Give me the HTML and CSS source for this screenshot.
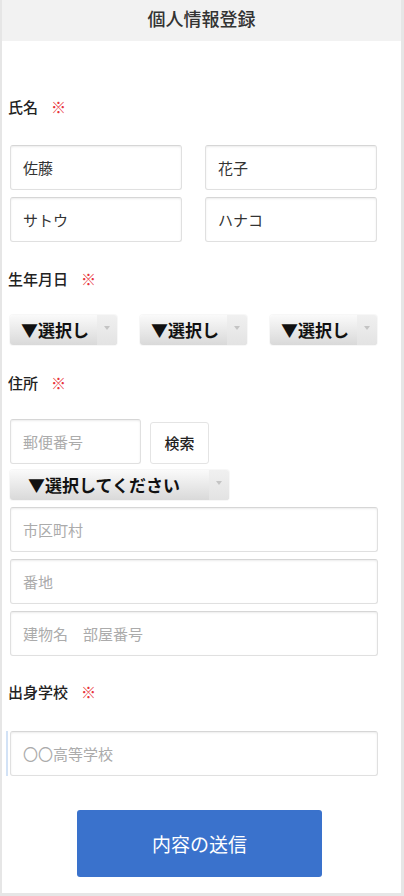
FILE: index.html
```html
<!DOCTYPE html>
<html lang="ja">
<head>
<meta charset="utf-8">
<title>個人情報登録</title>
<link rel="stylesheet" href="styles.css">
</head>
<body>
<div class="page">
  <header class="header">個人情報登録</header>
  <form class="form">
    <div class="label label-name">氏名<span class="req">※</span></div>
    <div class="name-grid">
      <div class="field">佐藤</div>
      <div class="field">花子</div>
      <div class="field">サトウ</div>
      <div class="field">ハナコ</div>
    </div>

    <div class="label label-birth">生年月日<span class="req">※</span></div>
    <div class="birth-grid">
      <div class="select"><span class="select-text">▼選択し</span><span class="select-btn"><span class="arrow"></span></span></div>
      <div class="select"><span class="select-text">▼選択し</span><span class="select-btn"><span class="arrow"></span></span></div>
      <div class="select"><span class="select-text">▼選択し</span><span class="select-btn"><span class="arrow"></span></span></div>
    </div>

    <div class="label label-addr">住所<span class="req">※</span></div>
    <div class="zip-row">
      <div class="field field-zip placeholder">郵便番号</div>
      <div class="search-btn">検索</div>
    </div>
    <div class="select select-wide"><span class="select-text">▼選択してください</span><span class="select-btn"><span class="arrow"></span></span></div>
    <div class="addr-list">
      <div class="field placeholder">市区町村</div>
      <div class="field placeholder">番地</div>
      <div class="field placeholder">建物名　部屋番号</div>
    </div>

    <div class="label label-school">出身学校<span class="req">※</span></div>
    <div class="focus-wrap">
      <div class="field placeholder">〇〇高等学校</div>
    </div>

    <div class="submit-row">
      <div class="submit">内容の送信</div>
    </div>
  </form>
</div>
</body>
</html>
```

FILE: styles.css
```css
* { box-sizing: border-box; }

html, body {
  margin: 0;
  padding: 0;
  background: #ffffff;
}

body {
  font-family: "Noto Sans CJK JP", "Noto Sans", sans-serif;
  color: #333333;
}

.page {
  width: 404px;
  height: 896px;
  border-left: 2px solid #e6e6e6;
  border-right: 3px solid #e6e6e6;
  border-bottom: 3px solid #e6e6e6;
  overflow: hidden;
}

.header {
  height: 41px;
  background: #f2f2f2;
  text-align: center;
  font-size: 18px;
  line-height: 36px;
  font-weight: 500;
  color: #333333;
}

.form {
  padding-left: 8px;
  width: 376px;
}

.label {
  font-size: 15px;
  line-height: 20px;
  height: 20px;
  font-weight: 500;
  color: #222222;
  margin-left: -2px;
}

.req {
  color: #e8333a;
  font-weight: 400;
  margin-left: 13px;
}

.label-name { margin-top: 56px; }
.label-birth { margin-top: 27px; }
.label-addr { margin-top: 28px; }
.label-school { margin-top: 26px; }

.field {
  height: 45px;
  border: 1px solid #e0e0e0;
  border-top-color: #d6d6d6;
  border-radius: 3px;
  box-shadow: inset 0 1px 2px rgba(0, 0, 0, 0.08);
  background: #ffffff;
  padding-left: 12px;
  font-size: 15px;
  line-height: 43px;
  color: #333333;
  white-space: nowrap;
}

.placeholder { color: #ababab; }

.name-grid {
  margin-top: 28px;
  display: grid;
  grid-template-columns: 172px 172px;
  column-gap: 23px;
  row-gap: 7px;
}

.birth-grid {
  margin-top: 26px;
  display: grid;
  grid-template-columns: 107px 107px 107px;
  column-gap: 23px;
}

.select {
  display: flex;
  height: 30px;
  border-radius: 3px;
  overflow: hidden;
  background: linear-gradient(#fafafa, #d9d9d9);
  box-shadow: 0 0 0 1px rgba(0, 0, 0, 0.03);
}

.select-text {
  flex: 1;
  overflow: hidden;
  white-space: nowrap;
  font-size: 17px;
  line-height: 30px;
  font-weight: 700;
  color: #111111;
  padding-left: 11px;
}

.select-btn {
  width: 20px;
  flex: none;
  background: linear-gradient(#f0f0f0, #e3e3e3);
  display: flex;
  align-items: center;
  justify-content: center;
}

.arrow {
  width: 0;
  height: 0;
  border-left: 3px solid transparent;
  border-right: 3px solid transparent;
  border-top: 4px solid #c4c4c4;
  margin-top: -4px;
}

.zip-row {
  margin-top: 26px;
  display: flex;
  align-items: flex-end;
  gap: 9px;
}

.field-zip { width: 131px; }

.search-btn {
  width: 59px;
  height: 42px;
  border: 1px solid #e4e4e4;
  border-radius: 3px;
  background: #ffffff;
  font-size: 15px;
  line-height: 40px;
  text-align: center;
  color: #222222;
  font-weight: 500;
}

.select-wide {
  width: 219px;
  margin-top: 6px;
}

.select-wide .select-text { padding-left: 18px; }

.addr-list {
  margin-top: 7px;
  display: flex;
  flex-direction: column;
  gap: 7px;
  width: 368px;
}

.focus-wrap {
  margin-top: 29px;
  margin-left: -4px;
  width: 372px;
  padding-left: 2px;
  border-left: 2px solid #d2e2f6;
}

.submit-row {
  margin-top: 34px;
  padding-left: 67px;
}

.submit {
  width: 245px;
  height: 67px;
  background: #3a72cc;
  border-radius: 3px;
  color: #ffffff;
  font-size: 19px;
  line-height: 67px;
  text-align: center;
}
```
